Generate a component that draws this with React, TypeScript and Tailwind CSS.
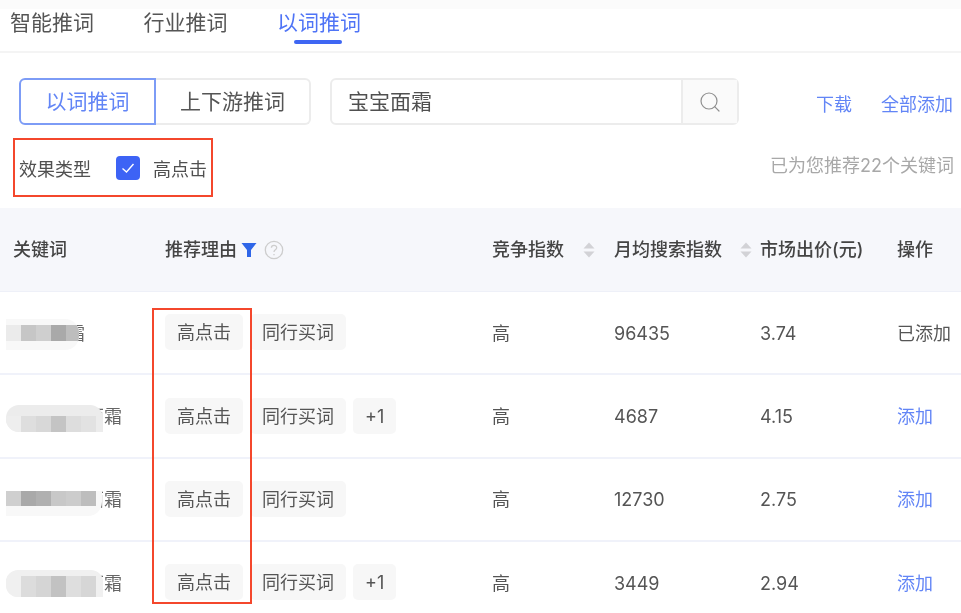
import React from "react";
import { Search } from "lucide-react";

interface Row {
  blur: string[];
  pale: string;
  shapeClass: string;
  blockClass: string;
  tail: string;
  tailClass: string;
  more: boolean;
  volume: string;
  price: string;
  added: boolean;
}

const rows: Row[] = [
  {
    blur: ["#ebebeb", "#c6c6c6", "#cfcfcf", "#a9a9a9", "#bdbdbd"],
    pale: "#f8f8f8",
    shapeClass: "mt-[3px] w-[73px] h-[31px] rounded-tr-[14px] rounded-br-[14px] pt-[6px]",
    blockClass: "h-[16px]",
    tail: "霜",
    tailClass: "-ml-[12px]",
    more: false,
    volume: "96435",
    price: "3.74",
    added: true,
  },
  {
    blur: ["#eeeeee", "#dedede", "#d8d8d8", "#c4c4c4", "#dddddd", "#e2e2e2"],
    pale: "#ececec",
    shapeClass: "mt-[3px] w-[97px] h-[27px] rounded-l-[13px] rounded-tr-[13px] pt-[11px]",
    blockClass: "h-[16px]",
    tail: "面霜",
    tailClass: "-ml-[17px]",
    more: true,
    volume: "4687",
    price: "4.15",
    added: false,
  },
  {
    blur: ["#cfcfcf", "#a9a9a9", "#b0b0b0", "#c8c8c8", "#cccccc", "#bdbdbd"],
    pale: "#f8f8f8",
    shapeClass: "mt-[7px] w-[96px] h-[25px] rounded-br-[14px]",
    blockClass: "h-[15px]",
    tail: "面霜",
    tailClass: "-ml-[16px] -mt-[1px]",
    more: false,
    volume: "12730",
    price: "2.75",
    added: false,
  },
  {
    blur: ["#f0f0f0", "#dcdcdc", "#d5d5d5", "#c2c2c2", "#dedede", "#d6d6d6"],
    pale: "#f0f0f0",
    shapeClass: "w-[97px] h-[27px] rounded-l-[12px] rounded-tr-[12px] pt-[6px]",
    blockClass: "h-[21px]",
    tail: "面霜",
    tailClass: "-ml-[17px]",
    more: true,
    volume: "3449",
    price: "2.94",
    added: false,
  },
];

const gridCols = "grid grid-cols-[165px_327px_122px_146px_137px_64px] items-center";

const SortIcon = () => (
  <svg width="12" height="16" viewBox="0 0 12 16" className="shrink-0" fill="#d2d2d6">
    <path d="M6 0.5 L11.5 6.5 L0.5 6.5 Z" />
    <path d="M6 15.5 L11.5 9.5 L0.5 9.5 Z" />
  </svg>
);

const Tag = ({ children }: { children: React.ReactNode }) => (
  <span className="flex h-[36px] items-center rounded-[5px] bg-[#f7f7f7] px-[12px] pt-[1px] text-[18px] text-[#555555]">
    {children}
  </span>
);

export default function App() {
  return (
    <div className="relative h-[613px] w-[961px] overflow-hidden bg-white font-['Inter','Noto_Sans_CJK_SC',sans-serif] blur-[0.5px]">
      <div className="h-[9px] bg-[#fbfbfb]" />
      <div className="flex h-[44px] gap-[49.5px] border-b-2 border-[#f4f4f4] pl-[10px] pt-[1px] text-[21px] leading-[26px] text-[#555555]">
        <span>智能推词</span>
        <span>行业推词</span>
        <span className="relative text-[#4f74f6]">
          以词推词
          <span className="absolute left-[17px] top-[30px] h-[4px] w-[48px] rounded-[2px] bg-[#3e66f3]" />
        </span>
      </div>

      <div className="mt-[25px] flex pl-[19px]">
        <div className="flex h-[47px] w-[292px] text-[21px]">
          <div className="flex w-[137px] items-center justify-center rounded-l-[6px] border-2 border-[#7d9cf6] text-[#6285f6]">
            以词推词
          </div>
          <div className="flex w-[155px] items-center justify-center rounded-r-[6px] border-2 border-l-0 border-[#ececec] text-[#555555]">
            上下游推词
          </div>
        </div>
        <div className="ml-[19px] flex h-[47px] w-[409px] rounded-[6px] border-2 border-[#ececec] text-[21px] text-[#505050]">
          <div className="flex flex-1 items-center pl-[16px]">宝宝面霜</div>
          <div className="flex w-[56px] items-center justify-center border-l-2 border-[#ececec] bg-[#fafafa]">
            <Search size={24} strokeWidth={1.2} className="text-[#8f8f8f]" />
          </div>
        </div>
        <div className="ml-[77px] flex gap-[29px] pt-[14px] text-[18px] leading-[26px] text-[#6285f6]">
          <span>下载</span>
          <span>全部添加</span>
        </div>
      </div>

      <div className="mt-[13px] flex items-start justify-between pr-[7px]">
        <div className="ml-[13px] flex h-[59px] w-[200px] items-center border-2 border-[#f4472c] pl-[4px] pt-[3px] text-[18px] text-[#505050]">
          <span>效果类型</span>
          <span className="-mt-[3px] ml-[25px] flex h-[24px] w-[24px] items-center justify-center rounded-[4px] bg-[#3d63f5]">
            <svg width="16" height="16" viewBox="0 0 16 16" fill="none" stroke="white" strokeWidth="1.4">
              <path d="M2.5 8.5 L6.5 12 L13.5 4" />
            </svg>
          </span>
          <span className="ml-[13px]">高点击</span>
        </div>
        <span className="pt-[15px] text-[18px] leading-[26px] text-[#a8a8a8]">已为您推荐22个关键词</span>
      </div>

      <div className={`${gridCols} mt-[11px] h-[83px] bg-[#f6f7fb] text-[18px] font-medium text-[#444444]`}>
        <span className="pl-[13px]">关键词</span>
        <span className="flex items-center">
          推荐理由
          <svg width="16" height="16" viewBox="0 0 16 16" className="ml-[4px]" fill="#2f66e8">
            <path d="M0.5 1 H15.5 L10 8 V15 H6 V8 Z" />
          </svg>
          <svg width="20" height="20" viewBox="0 0 20 20" className="ml-[7px]" fill="none" stroke="#cdcdcd" strokeWidth="1.3">
            <circle cx="10" cy="10" r="8.7" />
            <path d="M7.4 7.8 C7.4 4.6 12.7 4.6 12.7 7.8 C12.7 9.8 10 9.8 10 12" />
            <path d="M10 14 V15.3" />
          </svg>
        </span>
        <span className="flex items-center gap-[19px]">
          竞争指数
          <SortIcon />
        </span>
        <span className="flex items-center gap-[18px]">
          月均搜索指数
          <SortIcon />
        </span>
        <span>市场出价(元)</span>
        <span>操作</span>
      </div>

      <div className="relative border-t border-[#eef0f8] text-[18px] text-[#555555]">
        {rows.map((row) => (
          <div key={row.volume} className={`${gridCols} h-[83.4px] border-b-2 border-[#f0f2fa] pt-[1px]`}>
            <div className="flex items-center pl-[6px]">
              <div className={`relative z-10 flex shrink-0 items-start overflow-hidden ${row.shapeClass}`} style={{ backgroundColor: row.pale }}>
                {row.blur.map((color, i) => (
                  <span key={i} className={`w-[15px] shrink-0 ${row.blockClass}`} style={{ backgroundColor: color }} />
                ))}
              </div>
              <span className={`whitespace-nowrap text-[18px] text-[#666666] ${row.tailClass}`}>{row.tail}</span>
            </div>
            <div className="mb-[2px] flex gap-[7px]">
              <Tag>高点击</Tag>
              <Tag>同行买词</Tag>
              {row.more && <Tag>+1</Tag>}
            </div>
            <span>高</span>
            <span>{row.volume}</span>
            <span>{row.price}</span>
            {row.added ? (
              <span className="whitespace-nowrap">已添加</span>
            ) : (
              <span className="text-[#6285f6]">添加</span>
            )}
          </div>
        ))}
        <div className="absolute left-[152px] top-[16px] z-20 h-[296px] w-[100px] border-2 border-[#f4472c]" />
      </div>
    </div>
  );
}
